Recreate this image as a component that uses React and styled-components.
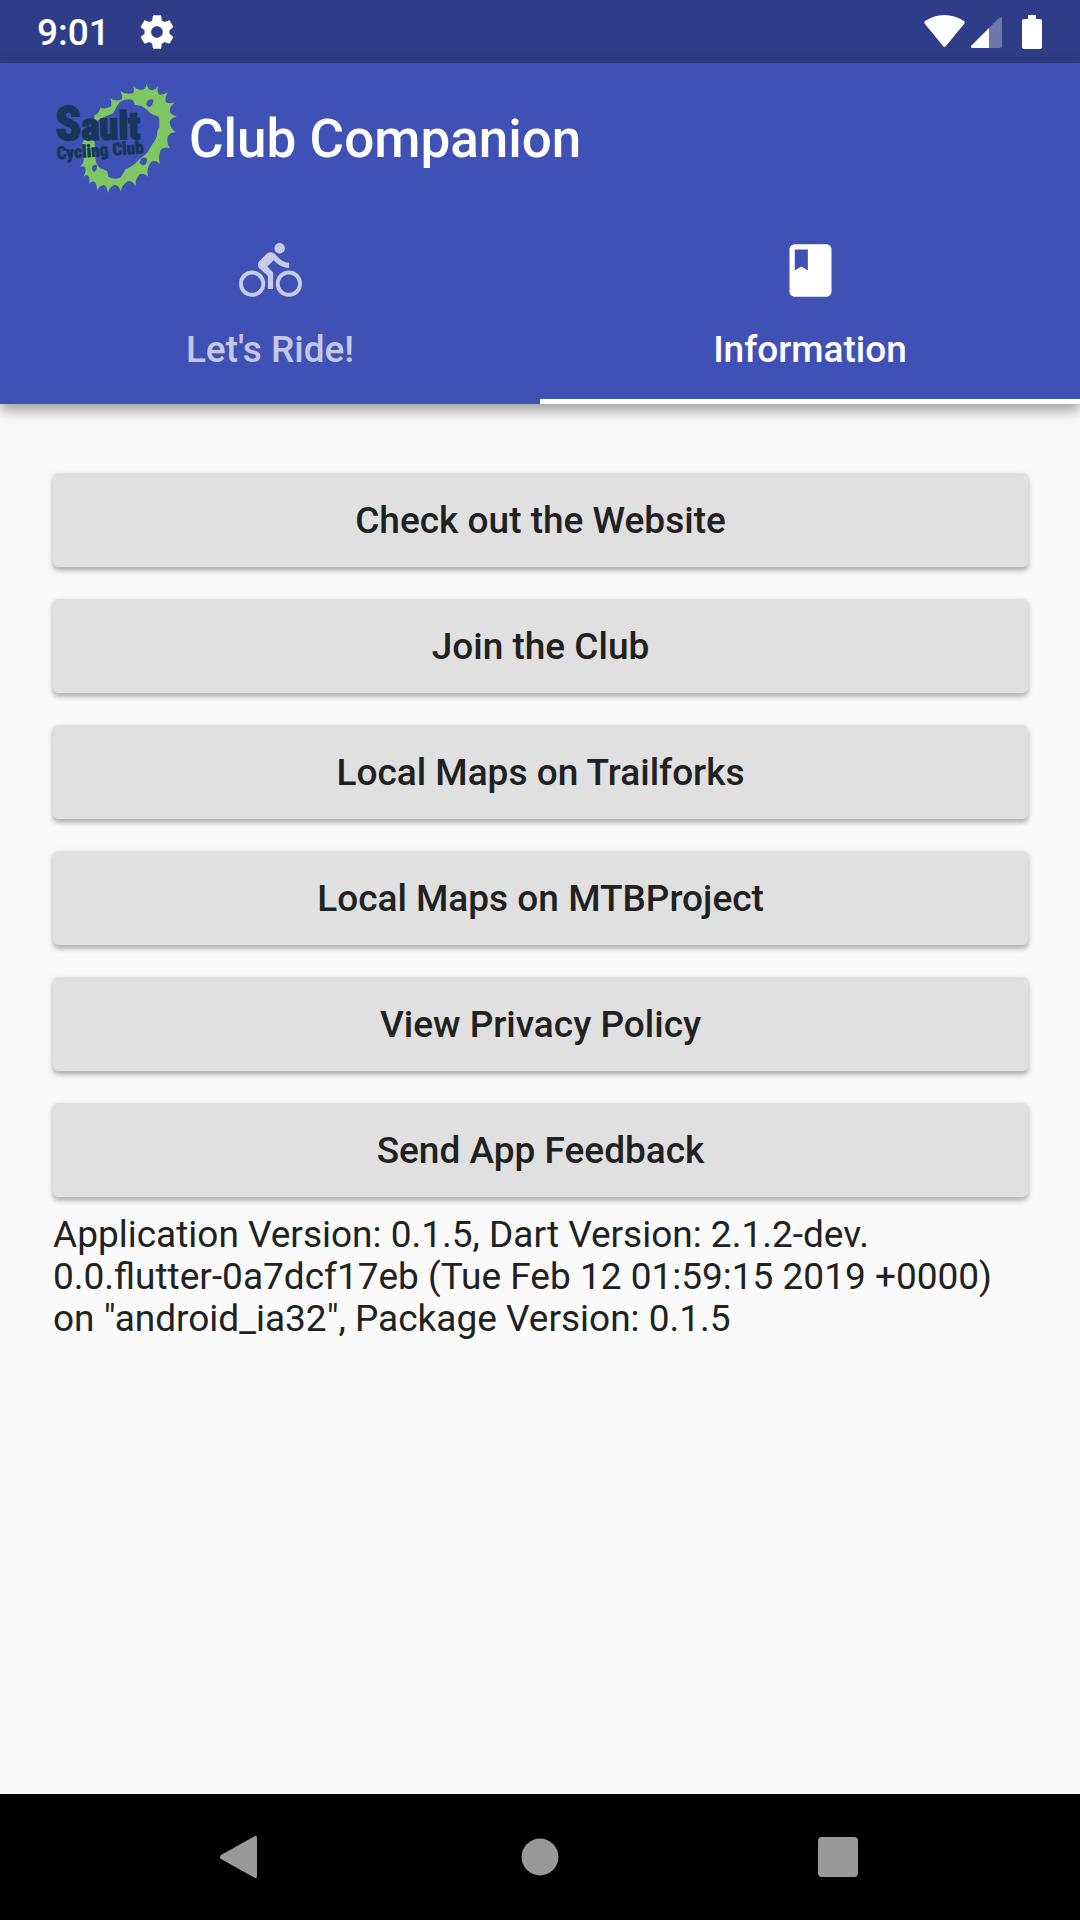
import React, { useState } from "react";
import styled, { createGlobalStyle } from "styled-components";
import { MdBook, MdDirectionsBike } from "react-icons/md";

const GlobalStyle = createGlobalStyle`
  * { box-sizing: border-box; }
  body { margin: 0; background: #fafafa; }
  button { font: inherit; }
`;

const Screen = styled.div`
  display: flex;
  flex-direction: column;
  min-height: 100vh;
  background: #fafafa;
  color: #212121;
  font-family: Roboto, "Liberation Sans", sans-serif;
  font-size: 37px;
`;

const StatusBar = styled.div`
  display: flex;
  align-items: center;
  justify-content: space-between;
  height: 63px;
  padding: 0 38px 0 37px;
  background: #2f3d88;
  color: #fff;
  font-weight: 500;
`;

const StatusGroup = styled.div`
  display: flex;
  align-items: center;
  gap: ${({ $gap }) => $gap}px;
  svg { display: block; }
`;

const Clock = styled.time`
  padding-top: 2px;
  line-height: 44px;
`;

const AppBar = styled.header`
  background: #3f51b5;
  color: #fff;
  box-shadow: 0 8px 12px rgba(0, 0, 0, 0.26), 0 2px 14px rgba(0, 0, 0, 0.14);
`;

const Toolbar = styled.div`
  display: flex;
  align-items: center;
  height: 147px;
  padding: 0 41px;
`;

const Title = styled.h1`
  margin: 0;
  padding-top: 4px;
  font-size: 53px;
  font-weight: 500;
  line-height: 62px;
`;

const TabList = styled.nav`
  display: grid;
  grid-template-columns: 1fr 1fr;
`;

const Tab = styled.button`
  display: flex;
  flex-direction: column;
  align-items: center;
  gap: 26px;
  padding: 29px 0 28px;
  border: 0;
  border-bottom: 5px solid ${({ $active }) => ($active ? "#fff" : "transparent")};
  background: none;
  color: ${({ $active }) => ($active ? "#fff" : "rgba(255, 255, 255, 0.7)")};
  font-weight: 500;
  line-height: 43px;
  svg { display: block; }
`;

const Content = styled.main`
  flex: 1;
  padding: 69px 52px 32px 53px;
`;

const ActionList = styled.div`
  display: flex;
  flex-direction: column;
  gap: 32px;
`;

const ActionButton = styled.button`
  height: 94px;
  padding: 2px 42px 0;
  border: 0;
  border-radius: 5px;
  background: #e0e0e0;
  color: #212121;
  font-weight: 500;
  line-height: 44px;
  box-shadow: 0 4px 5px rgba(0, 0, 0, 0.24), 0 1px 6px rgba(0, 0, 0, 0.12);
`;

const VersionText = styled.p`
  margin: 17px 0 0;
  line-height: 42px;
`;

const NavBar = styled.footer`
  display: flex;
  height: 126px;
  padding: 0 93px;
  background: #000;
`;

const NavButton = styled.button`
  display: flex;
  flex: 1;
  align-items: center;
  justify-content: center;
  border: 0;
  background: none;
  color: #999;
`;

const SettingsIcon = () => (
  <svg width="40" height="40" viewBox="0 0 24 24" fill="currentColor" aria-hidden="true">
    <path d="M19.43 12.98c.04-.32.07-.64.07-.98s-.03-.66-.07-.98l2.11-1.65c.19-.15.24-.42.12-.64l-2-3.46c-.12-.22-.39-.3-.61-.22l-2.49 1c-.52-.4-1.08-.73-1.69-.98l-.38-2.65C14.46 2.18 14.25 2 14 2h-4c-.25 0-.46.18-.49.42l-.38 2.65c-.61.25-1.17.59-1.69.98l-2.49-1c-.23-.09-.49 0-.61.22l-2 3.46c-.13.22-.07.49.12.64l2.11 1.65c-.04.32-.07.65-.07.98s.03.66.07.98l-2.11 1.65c-.19.15-.24.42-.12.64l2 3.46c.12.22.39.3.61.22l2.49-1c.52.4 1.08.73 1.69.98l.38 2.65c.03.24.24.42.49.42h4c.25 0 .46-.18.49-.42l.38-2.65c.61-.25 1.17-.59 1.69-.98l2.49 1c.23.09.49 0 .61-.22l2-3.46c.12-.22.07-.49-.12-.64l-2.11-1.65zM12 15.5c-1.93 0-3.5-1.57-3.5-3.5s1.57-3.5 3.5-3.5 3.5 1.57 3.5 3.5-1.57 3.5-3.5 3.5z" />
  </svg>
);

const WifiIcon = () => (
  <svg width="41" height="34" viewBox="0 0 41 34" fill="currentColor" aria-hidden="true">
    <path d="M1 9C0 8 0 7 1 6C13-2 28-2 40 6C41 7 41 8 40 9L22 31Q20.500 33 19 31Z" />
  </svg>
);

const SignalIcon = () => (
  <svg width="32" height="34" viewBox="0 0 32 34" fill="currentColor" aria-hidden="true">
    <path opacity=".3" d="M19 13L29 3Q32 1 32 4V31Q32 33 30 33H19Z" />
    <path d="M19 13V33H2Q0 32 1 31Z" />
  </svg>
);

const BatteryIcon = () => (
  <svg width="20" height="34" viewBox="0 0 20 34" fill="currentColor" aria-hidden="true">
    <path d="M6 0h8v4h4q2 0 2 2v26q0 2-2 2H2q-2 0-2-2V6q0-2 2-2h4z" />
  </svg>
);

const ClubLogo = () => (
  <svg width="148" height="133" viewBox="0 0 444 399" role="img" aria-label="Sault Cycling Club">
    <path
      fill="#80c662"
      fillRule="evenodd"
      d="M178 113Q196 119 211 109Q213 98 208 84Q222 97 243 88Q245 78 239 63Q253 75 276 70Q281 62 277 48Q288 62 309 58Q316 51 317 41Q321 60 335 61Q345 58 351 49Q347 66 355 74Q368 75 381 67Q371 80 374 96Q387 103 403 97Q385 109 386 126Q393 136 408 139Q389 144 386 157Q389 178 405 187Q387 187 380 200Q376 221 387 235Q371 229 360 238Q350 262 357 281Q344 268 330 276Q315 298 321 320Q309 307 296 313Q281 330 284 349Q275 332 261 333Q242 346 239 364Q233 344 221 344Q203 352 201 369Q198 350 189 344Q172 349 168 362Q168 342 161 335Q149 332 144 343Q148 324 141 317Q135 314 127 320Q137 305 133 292Q127 286 117 290Q128 280 128 269L124 220Q126 212 135 206L160 207L163 265Q165 286 177 294L199 304L202 320Q218 330 238 323L254 298Q278 288 292 271L320 247L334 223Q349 206 349 184L355 172V148Q352 136 339 136L327 129Q313 112 298 107L281 104Q279 87 262 88Q240 88 229 107L216 130L198 137L170 151V192H160V135Q174 132 178 113ZM318 94Q327 85 337 89Q338 103 326 111Q312 110 318 94ZM300 267Q309 259 318 266Q320 278 309 286Q297 285 296 276ZM154 289Q162 282 168 286Q170 299 159 306Q150 300 154 289Z"
    />
    <g fill="#17365b" stroke="#17365b" fontFamily='Impact, "Roboto Condensed", "Open Sans Condensed", Roboto, sans-serif' fontWeight="800">
      <text x="44" y="211" fontSize="142" strokeWidth="5" transform="rotate(-1 44 211)">
        S<tspan fontSize="116">ault</tspan>
      </text>
      <text x="48" y="268" fontSize="52" strokeWidth="2" transform="rotate(-4 48 268)">Cycling Club</text>
    </g>
  </svg>
);

const BackIcon = () => (
  <svg width="44" height="44" viewBox="0 0 44 44" fill="currentColor" aria-hidden="true">
    <path d="M35 1Q37 0 37 3V41Q37 44 35 43L1 24Q-1 22 1 20Z" />
  </svg>
);

const HomeIcon = () => (
  <svg width="38" height="38" viewBox="0 0 38 38" fill="currentColor" aria-hidden="true">
    <circle cx="19" cy="19" r="18.500" />
  </svg>
);

const RecentIcon = () => (
  <svg width="40" height="40" viewBox="0 0 40 40" fill="currentColor" aria-hidden="true">
    <rect width="40" height="40" rx="4" />
  </svg>
);

const tabs = [
  { id: "ride", label: "Let's Ride!", Icon: MdDirectionsBike },
  { id: "info", label: "Information", Icon: MdBook },
];

const actions = [
  "Check out the Website",
  "Join the Club",
  "Local Maps on Trailforks",
  "Local Maps on MTBProject",
  "View Privacy Policy",
  "Send App Feedback",
];

const navItems = [
  { label: "Back", Icon: BackIcon },
  { label: "Home", Icon: HomeIcon },
  { label: "Recent apps", Icon: RecentIcon },
];

export default function App() {
  const [activeTab, setActiveTab] = useState("info");

  return (
    <Screen>
      <GlobalStyle />
      <StatusBar>
        <StatusGroup $gap={27}>
          <Clock>9:01</Clock>
          <SettingsIcon />
        </StatusGroup>
        <StatusGroup $gap={20}>
          <StatusGroup $gap={5}>
            <WifiIcon />
            <SignalIcon />
          </StatusGroup>
          <BatteryIcon />
        </StatusGroup>
      </StatusBar>

      <AppBar>
        <Toolbar>
          <ClubLogo />
          <Title>Club Companion</Title>
        </Toolbar>
        <TabList>
          {tabs.map(({ id, label, Icon }) => (
            <Tab
              key={id}
              type="button"
              $active={activeTab === id}
              aria-current={activeTab === id ? "page" : undefined}
              onClick={() => setActiveTab(id)}
            >
              <Icon size={63} aria-hidden="true" />
              {label}
            </Tab>
          ))}
        </TabList>
      </AppBar>

      <Content>
        <ActionList>
          {actions.map((label) => (
            <ActionButton key={label} type="button">
              {label}
            </ActionButton>
          ))}
        </ActionList>
        <VersionText>
          Application Version: 0.1.5, Dart Version: 2.1.2-dev.
          <br />
          0.0.flutter-0a7dcf17eb (Tue Feb 12 01:59:15 2019 +0000)
          <br />
          on "android_ia32", Package Version: 0.1.5
        </VersionText>
      </Content>

      <NavBar>
        {navItems.map(({ label, Icon }) => (
          <NavButton key={label} type="button" aria-label={label}>
            <Icon />
          </NavButton>
        ))}
      </NavBar>
    </Screen>
  );
}
